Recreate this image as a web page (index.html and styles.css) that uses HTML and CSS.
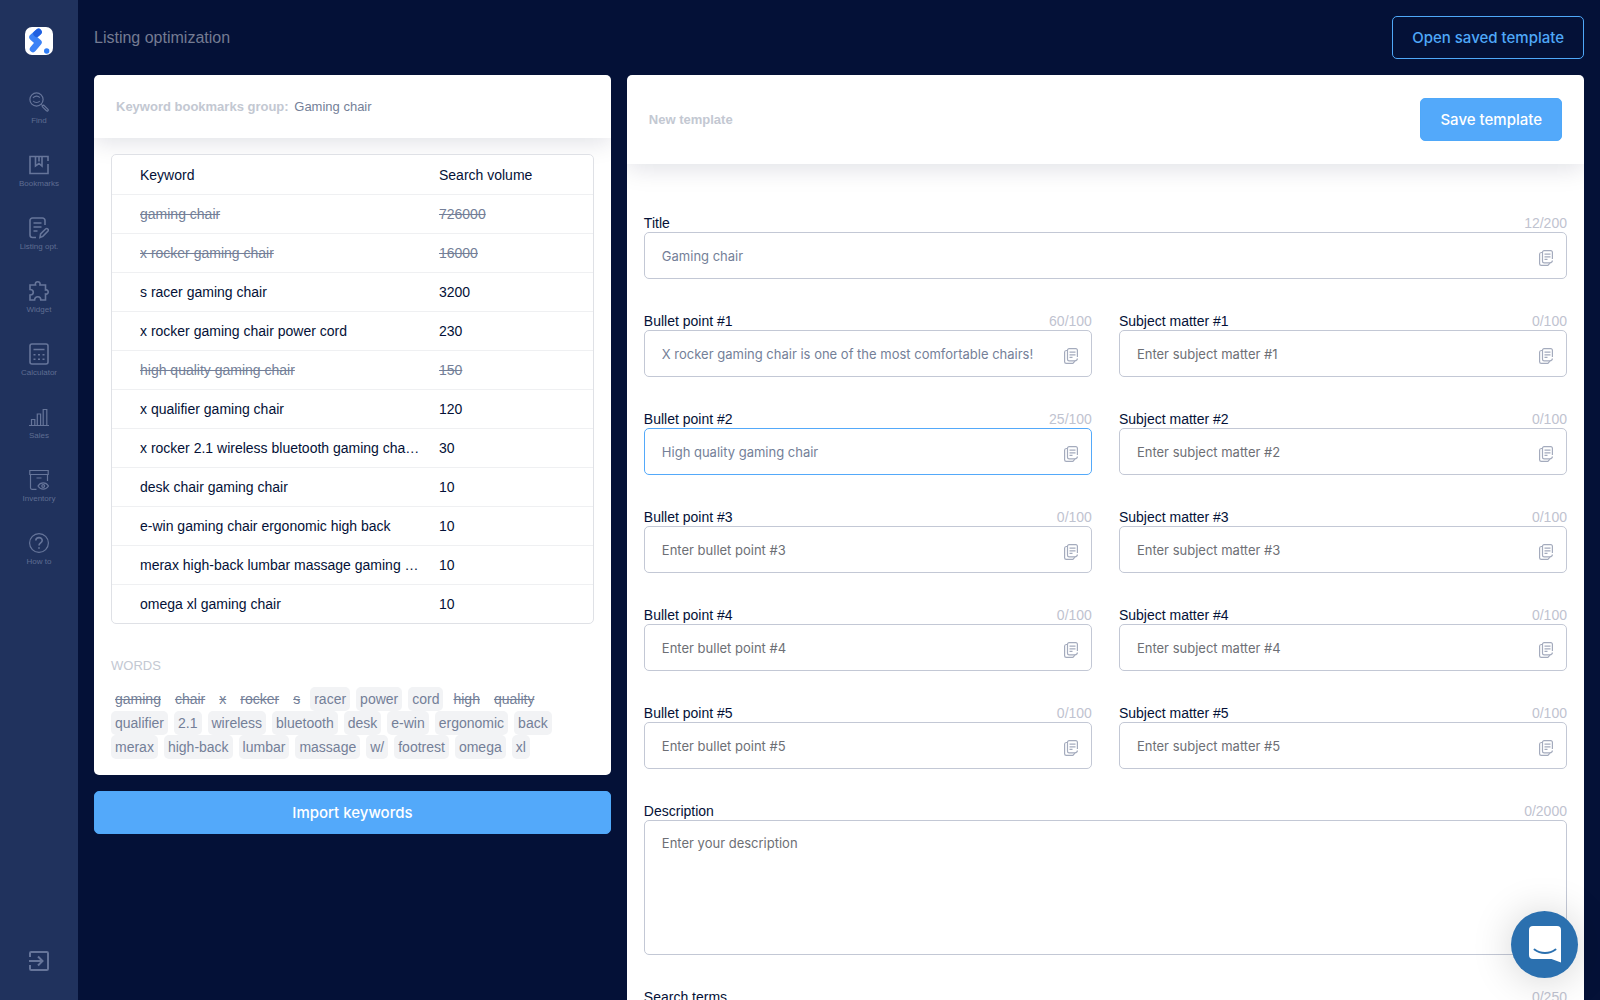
FILE: index.html
```html
<!DOCTYPE html>
<html lang="en">
<head>
    <meta charset="UTF-8">
    <meta name="viewport" content="width=device-width, initial-scale=1.0">
    <title>Listing optimization</title>
    <link rel="stylesheet" href="styles.css">
</head>
<body>
    <!-- shared icon -->
    <svg class="sprite" aria-hidden="true">
        <symbol id="icon-copy" viewBox="0 0 14 16">
            <path d="M3.5 2.5H2.2A1.7 1.7 0 0 0 .6 4.2v9.5a1.7 1.7 0 0 0 1.7 1.7h6.6l2-2.2"/>
            <path d="M13.4 9V2.2A1.6 1.6 0 0 0 11.8.6H5.1a1.6 1.6 0 0 0-1.6 1.6v9a1.6 1.6 0 0 0 1.6 1.6h5.6c1.5 0 2.7-.8 2.7-2.2"/>
            <path d="M5.5 4.2h6M5.5 6.8h6M5.5 9.4h3"/>
        </symbol>
    </svg>

    <div class="app">
        <aside class="sidebar">
            <a class="logo" href="#" aria-label="Home">
                <svg viewBox="0 0 28 28">
                    <rect width="28" height="28" rx="7" fill="#fff"/>
                    <path d="M13.500 5 7.500 10.200l6 5.300-5.500 6.500" fill="none" stroke="#3b82f6" stroke-width="6.500" stroke-linecap="round" stroke-linejoin="round"/>
                    <path d="M13.500 5 11.500 6.700" fill="none" stroke="#1f5fe0" stroke-width="6.500" stroke-linecap="round"/>
                    <circle cx="21.700" cy="24" r="2.700" fill="#2f7df6"/>
                </svg>
            </a>
            <nav class="menu">
                <a class="menu-item" href="#">
                    <svg viewBox="0 0 20 20"><circle cx="7.5" cy="7.5" r="6.6"/><path d="M4 6c1.400-2.200 5-2.600 6.800-.4M4.200 9c1.600 2 5 2 6.600 0M12.300 12.300l1.500 1.500M13.200 14.600l1.500-1.500 4.300 4.200c.8 1-.6 2.300-1.500 1.500z"/></svg>
                    <span>Find</span>
                </a>
                <a class="menu-item" href="#">
                    <svg viewBox="0 0 20 20" class="bold"><path d="M19 6V1.500H1v17h18V9M6.500 1.500V11L10 8.500l3 2.500V1.500M10 1.500v5"/></svg>
                    <span>Bookmarks</span>
                </a>
                <a class="menu-item" href="#">
                    <svg viewBox="0 0 20 22" class="bold"><path d="M7 20.500H3.500A2.500 2.500 0 0 1 1 18V3.500A2.500 2.500 0 0 1 3.500 1h10A2.500 2.500 0 0 1 16 3.500V8M4.500 6h8M4.500 10h8M4.500 14h4M11 20.500l.6-3.500 5.200-5.200c1.400-1 3.200.8 2.200 2.200l-5.200 5.400z"/></svg>
                    <span>Listing opt.</span>
                </a>
                <a class="menu-item" href="#">
                    <svg viewBox="0 0 20 20" class="bold"><path d="M1 4h5.500C6 1.800 7 .8 8.700.8S11.400 1.800 11 4h5.500v5c1.800-.4 2.700.5 2.700 2s-1 2.400-2.700 2v6h-4.700c0-2-1.200-3.200-3-3.200S5.600 17 5.600 19H1v-5c2 0 3.300-1 3.300-2.700S3 8.500 1 8.500z"/></svg>
                    <span>Widget</span>
                </a>
                <a class="menu-item" href="#">
                    <svg viewBox="0 0 20 22" class="bold"><rect x="1" y="1" width="18" height="20" rx="2"/><path d="M4.500 6.500h11M4.500 11.800h2M9 11.800h2M13.500 11.800h2M4.500 16.200h2M9 16.200h2M13.500 16.200h2"/></svg>
                    <span>Calculator</span>
                </a>
                <a class="menu-item" href="#">
                    <svg viewBox="0 0 20 20"><path d="M0 18.500h20M2.500 18v-5.500h3.300V18M8.300 18V7h3.300v11M14.200 18V2.500h3.600V18"/></svg>
                    <span>Sales</span>
                </a>
                <a class="menu-item" href="#">
                    <svg viewBox="0 0 20 20"><path d="M.8 4.500v-4h18.400v4zM1.500 4.500v13.300c0 .8.700 1.500 1.500 1.500h4.500M18.500 4.500V11M7.500 8h5M9 16c2.500-4.200 8-4.200 10.500 0-2.500 4.200-8 4.200-10.500 0z"/><circle cx="14.200" cy="16" r="1.400"/></svg>
                    <span>Inventory</span>
                </a>
                <a class="menu-item" href="#">
                    <svg viewBox="0 0 20 20"><circle cx="10" cy="10" r="9.400"/><path class="thick" d="M6.800 7.500C7 3.600 13.300 3.800 13.200 7.500c0 2.400-3.200 2.400-3.200 5M10 14.200v1.600"/></svg>
                    <span>How to</span>
                </a>
            </nav>
            <a class="logout" href="#" aria-label="Log out">
                <svg viewBox="0 0 20 20"><path d="M1 6V2.200C1 1.500 1.500 1 2.200 1h15.600c.7 0 1.200.5 1.200 1.200v15.600c0 .7-.5 1.200-1.200 1.200H2.200C1.500 19 1 18.500 1 17.800V14M0 10h13M9 5.500l4.500 4.500L9 14.500"/></svg>
            </a>
        </aside>

        <main class="main">
            <header class="topbar">
                <h1>Listing optimization</h1>
                <button class="btn btn-outline" type="button">Open saved template</button>
            </header>

            <div class="columns">
                <div class="left-column">
                    <section class="panel">
                        <div class="panel-header">
                            <p><span class="muted">Keyword bookmarks group:</span> <span class="group-name">Gaming chair</span></p>
                        </div>
                        <div class="keywords">
                            <table class="keyword-table">
                                <thead>
                                    <tr><th class="col-keyword">Keyword</th><th>Search volume</th></tr>
                                </thead>
                                <tbody>
                                    <tr class="used"><td>gaming chair</td><td>726000</td></tr>
                                    <tr class="used"><td>x rocker gaming chair</td><td>16000</td></tr>
                                    <tr><td>s racer gaming chair</td><td>3200</td></tr>
                                    <tr><td>x rocker gaming chair power cord</td><td>230</td></tr>
                                    <tr class="used"><td>high quality gaming chair</td><td>150</td></tr>
                                    <tr><td>x qualifier gaming chair</td><td>120</td></tr>
                                    <tr><td>x rocker 2.1 wireless bluetooth gaming cha…</td><td>30</td></tr>
                                    <tr><td>desk chair gaming chair</td><td>10</td></tr>
                                    <tr><td>e-win gaming chair ergonomic high back</td><td>10</td></tr>
                                    <tr><td>merax high-back lumbar massage gaming …</td><td>10</td></tr>
                                    <tr><td>omega xl gaming chair</td><td>10</td></tr>
                                </tbody>
                            </table>

                            <h2>WORDS</h2>
                            <div class="words">
                                <span class="word used">gaming</span>
                                <span class="word used">chair</span>
                                <span class="word used">x</span>
                                <span class="word used">rocker</span>
                                <span class="word used">s</span>
                                <span class="word">racer</span>
                                <span class="word">power</span>
                                <span class="word">cord</span>
                                <span class="word used">high</span>
                                <span class="word used">quality</span>
                                <span class="word">qualifier</span>
                                <span class="word">2.1</span>
                                <span class="word">wireless</span>
                                <span class="word">bluetooth</span>
                                <span class="word">desk</span>
                                <span class="word">e-win</span>
                                <span class="word">ergonomic</span>
                                <span class="word">back</span>
                                <span class="word">merax</span>
                                <span class="word">high-back</span>
                                <span class="word">lumbar</span>
                                <span class="word">massage</span>
                                <span class="word">w/</span>
                                <span class="word">footrest</span>
                                <span class="word">omega</span>
                                <span class="word">xl</span>
                            </div>
                        </div>
                    </section>
                    <button class="btn btn-primary" type="button">Import keywords</button>
                </div>

                <section class="panel template">
                    <div class="panel-header template-header">
                        <span class="muted">New template</span>
                        <button class="btn btn-primary" type="button">Save template</button>
                    </div>
                    <form class="template-form">
                        <div class="field wide">
                            <label for="title">Title</label><span class="count">12/200</span>
                            <div class="control">
                                <input id="title" type="text" value="Gaming chair">
                                <button class="copy" type="button" aria-label="Copy"><svg><use href="#icon-copy"/></svg></button>
                            </div>
                        </div>
                        <div class="field">
                            <label for="bullet-1">Bullet point #1</label><span class="count">60/100</span>
                            <div class="control">
                                <input id="bullet-1" type="text" value="X rocker gaming chair is one of the most comfortable chairs!">
                                <button class="copy" type="button" aria-label="Copy"><svg><use href="#icon-copy"/></svg></button>
                            </div>
                        </div>
                        <div class="field">
                            <label for="subject-1">Subject matter #1</label><span class="count">0/100</span>
                            <div class="control">
                                <input id="subject-1" type="text" placeholder="Enter subject matter #1">
                                <button class="copy" type="button" aria-label="Copy"><svg><use href="#icon-copy"/></svg></button>
                            </div>
                        </div>
                        <div class="field">
                            <label for="bullet-2">Bullet point #2</label><span class="count">25/100</span>
                            <div class="control">
                                <input id="bullet-2" class="active" type="text" value="High quality gaming chair">
                                <button class="copy" type="button" aria-label="Copy"><svg><use href="#icon-copy"/></svg></button>
                            </div>
                        </div>
                        <div class="field">
                            <label for="subject-2">Subject matter #2</label><span class="count">0/100</span>
                            <div class="control">
                                <input id="subject-2" type="text" placeholder="Enter subject matter #2">
                                <button class="copy" type="button" aria-label="Copy"><svg><use href="#icon-copy"/></svg></button>
                            </div>
                        </div>
                        <div class="field">
                            <label for="bullet-3">Bullet point #3</label><span class="count">0/100</span>
                            <div class="control">
                                <input id="bullet-3" type="text" placeholder="Enter bullet point #3">
                                <button class="copy" type="button" aria-label="Copy"><svg><use href="#icon-copy"/></svg></button>
                            </div>
                        </div>
                        <div class="field">
                            <label for="subject-3">Subject matter #3</label><span class="count">0/100</span>
                            <div class="control">
                                <input id="subject-3" type="text" placeholder="Enter subject matter #3">
                                <button class="copy" type="button" aria-label="Copy"><svg><use href="#icon-copy"/></svg></button>
                            </div>
                        </div>
                        <div class="field">
                            <label for="bullet-4">Bullet point #4</label><span class="count">0/100</span>
                            <div class="control">
                                <input id="bullet-4" type="text" placeholder="Enter bullet point #4">
                                <button class="copy" type="button" aria-label="Copy"><svg><use href="#icon-copy"/></svg></button>
                            </div>
                        </div>
                        <div class="field">
                            <label for="subject-4">Subject matter #4</label><span class="count">0/100</span>
                            <div class="control">
                                <input id="subject-4" type="text" placeholder="Enter subject matter #4">
                                <button class="copy" type="button" aria-label="Copy"><svg><use href="#icon-copy"/></svg></button>
                            </div>
                        </div>
                        <div class="field">
                            <label for="bullet-5">Bullet point #5</label><span class="count">0/100</span>
                            <div class="control">
                                <input id="bullet-5" type="text" placeholder="Enter bullet point #5">
                                <button class="copy" type="button" aria-label="Copy"><svg><use href="#icon-copy"/></svg></button>
                            </div>
                        </div>
                        <div class="field">
                            <label for="subject-5">Subject matter #5</label><span class="count">0/100</span>
                            <div class="control">
                                <input id="subject-5" type="text" placeholder="Enter subject matter #5">
                                <button class="copy" type="button" aria-label="Copy"><svg><use href="#icon-copy"/></svg></button>
                            </div>
                        </div>
                        <div class="field wide">
                            <label for="description">Description</label><span class="count">0/2000</span>
                            <div class="control">
                                <textarea id="description" placeholder="Enter your description"></textarea>
                            </div>
                        </div>
                        <div class="field wide">
                            <label for="search-terms">Search terms</label><span class="count">0/250</span>
                            <div class="control">
                                <textarea id="search-terms"></textarea>
                            </div>
                        </div>
                    </form>
                </section>
            </div>
        </main>
    </div>

    <button class="chat" type="button" aria-label="Open chat">
        <svg viewBox="0 0 32 37">
            <path d="M4 0h24a4 4 0 0 1 4 4v32.500L22.500 33H4a4 4 0 0 1-4-4V4a4 4 0 0 1 4-4z" fill="#fff"/>
            <path d="M5.500 23.500c6 4.600 15 4.600 21 0" fill="none" stroke="#2b70af" stroke-width="2" stroke-linecap="round"/>
        </svg>
    </button>
</body>
</html>
```

FILE: styles.css
```css
/* styles.css */

* {
    box-sizing: border-box;
}

body {
    margin: 0;
    font-family: "Liberation Sans", Arial, sans-serif;
    font-size: 14px;
    color: #041137;
    background-color: #041137;
}

h1, h2, p {
    margin: 0;
    font-weight: normal;
}

.sprite {
    display: none;
}

.app {
    display: flex;
    height: 100vh;
}

/* Sidebar */

.sidebar {
    display: flex;
    flex-direction: column;
    align-items: center;
    width: 78px;
    flex-shrink: 0;
    padding: 27px 0 28px;
    background-color: #20325d;
}

.logo svg {
    display: block;
    width: 28px;
    height: 28px;
}

.menu {
    display: flex;
    flex-direction: column;
    margin-top: 36px;
}

.menu-item {
    display: flex;
    flex-direction: column;
    align-items: center;
    gap: 2px;
    height: 63px;
    font-size: 8px;
    line-height: 12px;
    color: #5f6d92;
    text-decoration: none;
}

.menu-item svg,
.logout svg {
    display: block;
    width: 20px;
    height: 22px;
    fill: none;
    stroke: #66759a;
    stroke-width: 1.2;
}

.menu-item svg.bold,
.menu-item .thick {
    stroke-width: 1.6;
}

.logout {
    margin-top: auto;
}

.logout svg {
    stroke-width: 2;
}

/* Main */

.main {
    flex: 1;
    min-width: 0;
    padding: 16px;
    overflow-y: auto;
    scrollbar-width: none;
}

.topbar {
    display: flex;
    justify-content: space-between;
    align-items: center;
    margin-bottom: 16px;
}

.topbar h1 {
    font-size: 16px;
    color: #747b92;
}

.btn {
    height: 43px;
    padding: 0 19px;
    border: 1px solid #4fa8f9;
    border-radius: 5px;
    font-family: Inter, sans-serif;
    font-size: 15px;
    font-weight: 500;
    cursor: pointer;
}

.btn-outline {
    background: none;
    color: #4fa8f9;
}

.btn-primary {
    background-color: #53a9fa;
    color: #fff;
}

.columns {
    display: grid;
    grid-template-columns: 27fr 50fr;
    gap: 16px;
    align-items: start;
}

.left-column {
    display: flex;
    flex-direction: column;
    gap: 16px;
    min-width: 0;
}

.panel {
    background-color: #fff;
    border-radius: 5px;
    overflow: hidden;
}

.panel-header {
    padding: 22px;
    font-size: 13px;
    line-height: 19px;
    box-shadow: 0 4px 24px rgba(4, 17, 55, 0.13);
}

.muted {
    margin-right: 2px;
    font-weight: bold;
    color: #c3c8d2;
}

.group-name {
    color: #747f98;
}

.keywords {
    padding: 16px 17px;
}

.keyword-table {
    position: relative;
    width: 100%;
    table-layout: fixed;
    border: 1px solid #dfe1e6;
    border-radius: 5px;
    border-spacing: 0;
    background-color: #fff;
}

.keyword-table th,
.keyword-table td {
    height: 39px;
    padding: 0 0 0 28px;
    font-weight: normal;
    text-align: left;
    white-space: nowrap;
}

.keyword-table th + th,
.keyword-table td + td {
    padding-left: 0;
}

.keyword-table td {
    border-top: 1px solid #eff0f2;
}

.col-keyword {
    width: 68%;
}

.keyword-table .used td {
    color: #747f98;
    text-decoration: line-through;
}

.keywords h2 {
    margin: 33px 0 12px;
    font-size: 13px;
    line-height: 18px;
    color: #c3c8d2;
}

.words {
    display: flex;
    flex-wrap: wrap;
    column-gap: 6px;
    color: #747f98;
}

.word {
    padding: 0 4px;
    line-height: 24px;
    border-radius: 5px;
    background-color: #f2f3f5;
}

.word.used {
    background: none;
    text-decoration: line-through;
}

/* Template form */

.template-header {
    display: flex;
    justify-content: space-between;
    align-items: center;
    padding: 23px 22px;
}

.template-form {
    display: grid;
    grid-template-columns: 1fr 1fr;
    gap: 33px 27px;
    padding: 50px 17px;
}

.field {
    display: grid;
    grid-template-columns: 1fr auto;
    min-width: 0;
    line-height: 18px;
}

.wide,
.control {
    grid-column: 1 / -1;
}

.count {
    color: #bfc3d0;
}

.control {
    position: relative;
}

.control input,
.control textarea {
    display: block;
    width: 100%;
    height: 47px;
    padding: 0 40px 0 17px;
    border: 1px solid #c3c8d5;
    border-radius: 5px;
    background-color: #fff;
    font-family: Inter, sans-serif;
    font-size: 13px;
    color: #747f98;
}

.control textarea {
    height: 135px;
    padding-top: 14px;
    resize: none;
}

.control input.active {
    border-color: #53a9fa;
}

.control ::placeholder {
    color: #6d6f75;
}

.copy {
    position: absolute;
    top: 18px;
    right: 14px;
    padding: 0;
    border: none;
    background: none;
    cursor: pointer;
}

.copy svg {
    display: block;
    width: 14px;
    height: 16px;
    fill: none;
    stroke: #a4abbd;
    stroke-width: 1.2;
}

/* Chat launcher */

.chat {
    position: fixed;
    right: 22px;
    bottom: 22px;
    display: flex;
    align-items: center;
    justify-content: center;
    width: 67px;
    height: 67px;
    padding: 0;
    border: none;
    border-radius: 50%;
    background-color: #2b70af;
    box-shadow: 0 2px 40px rgba(0, 0, 0, 0.18);
    cursor: pointer;
}

.chat svg {
    width: 32px;
    height: 37px;
}
```
